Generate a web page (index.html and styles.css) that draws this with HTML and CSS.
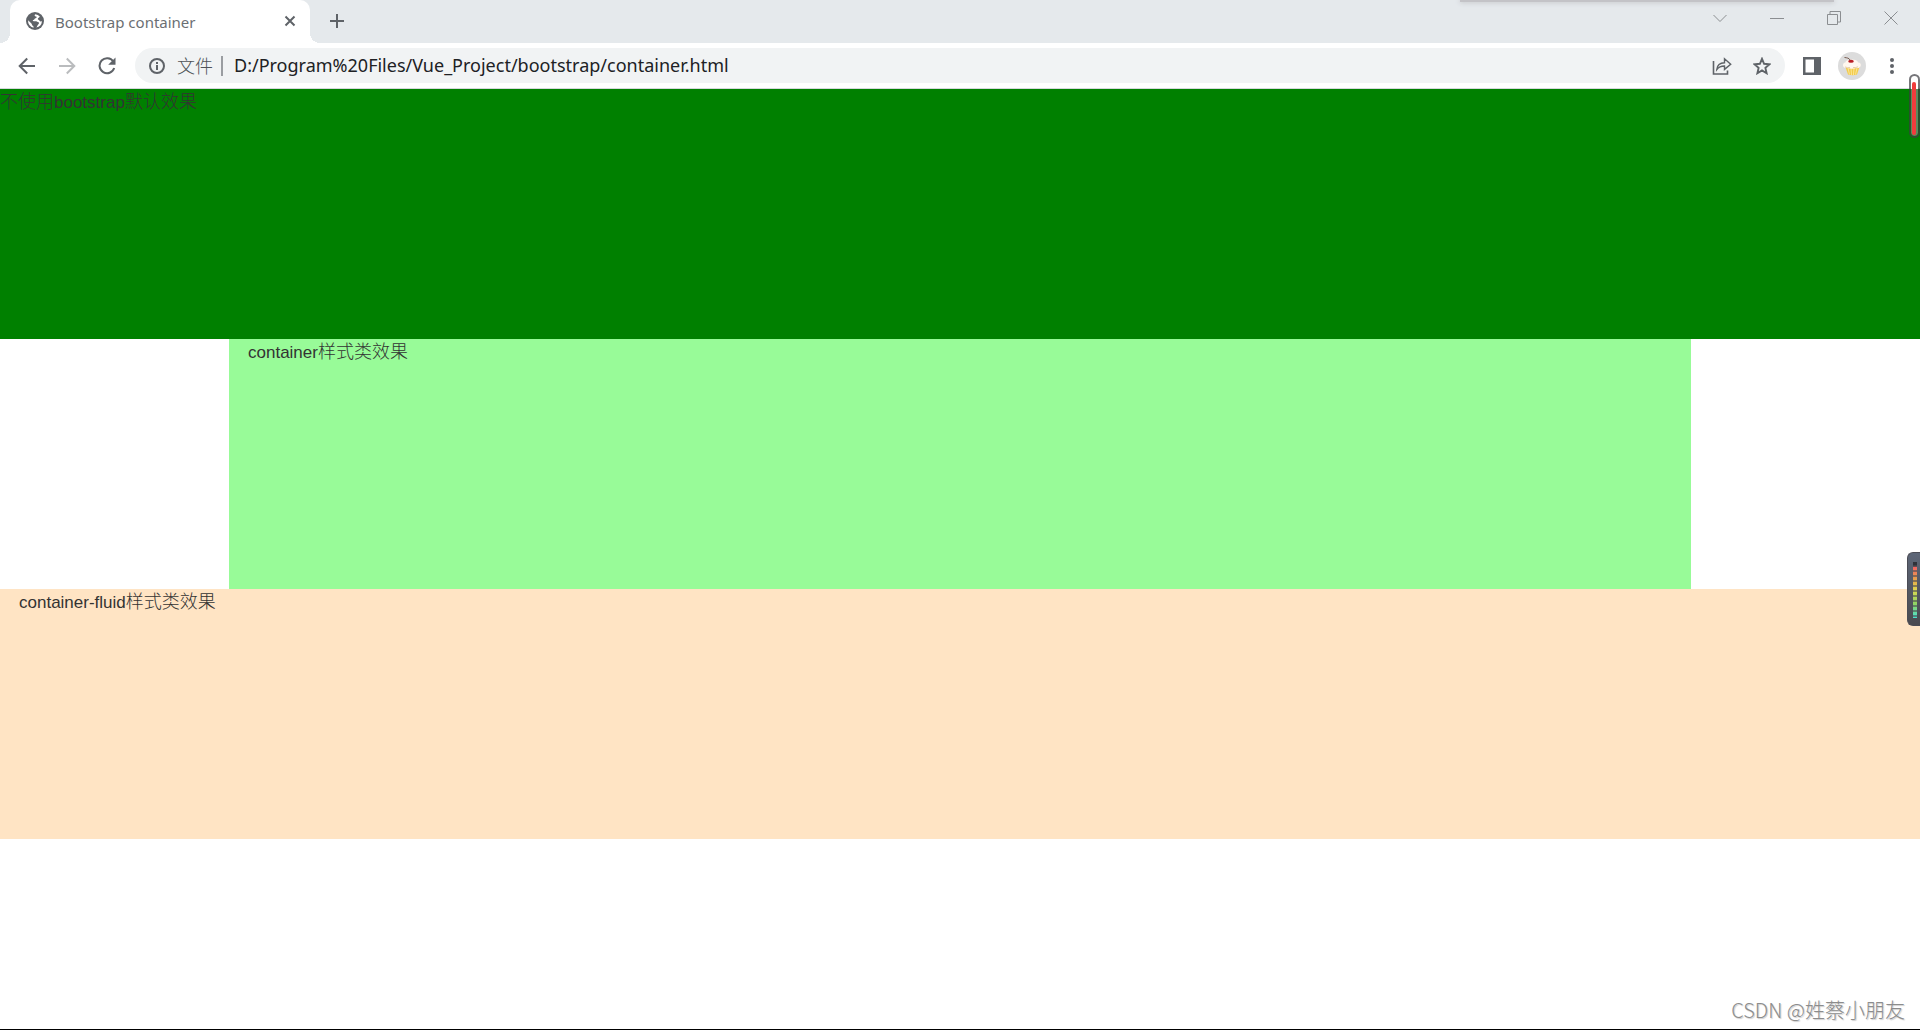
FILE: index.html
```html
<!DOCTYPE html>
<html lang="zh-CN">
<head>
<meta charset="utf-8">
<title>Bootstrap container</title>
<link rel="stylesheet" href="styles.css">
</head>
<body>
<header class="browser">
  <div class="tabstrip">
    <div class="tab">
      <svg class="tab-icon" viewBox="0 0 18 18" width="18" height="18"><circle cx="9" cy="9" r="9" fill="#5f6368"/><path d="M9.300 2.200C8 3 8.600 4.300 10 4.500c1.200.2.600 1.500-.4 1.700-1.300.2-1 1.600-2.300 1.900-.9.200-.6 1.200.5 1.200h2.400c1 0 1.200.8 2.200 1 1 .2.800 1.200 0 1.900-1 .8-1 2.200-2.200 3.300A7 7 0 0 0 16 9.300c-1 .3-2.200.2-2.600-.8-.3-.9-1.600-.6-1.600-1.600 0-1.200 1.600-.9 2-2.300A7 7 0 0 0 9.300 2.200zM2.100 8.200a7 7 0 0 0 5.400 7.600c.2-1-.1-1.600-.8-2-.9-.5-.6-1.700-1.300-2.300z" fill="#fff"/></svg>
      <span class="tab-title">Bootstrap container</span>
      <button class="tab-close" aria-label="关闭标签页"><svg viewBox="0 0 12 12" width="12" height="12"><path d="M1.500 1.500l9 9M10.500 1.500l-9 9" stroke="#5f6368" stroke-width="2"/></svg></button>
    </div>
    <button class="new-tab" aria-label="新标签页"><svg viewBox="0 0 16 16" width="16" height="16"><path d="M8 1v14M1 8h14" stroke="#5f6368" stroke-width="2"/></svg></button>
    <div class="window-controls">
      <button aria-label="搜索标签页"><svg viewBox="0 0 14 14" width="14" height="14"><path d="M.5 4L7 10.500 13.500 4" fill="none" stroke="#8b8e91"/></svg></button>
      <button aria-label="最小化"><svg viewBox="0 0 14 14" width="14" height="14"><path d="M0 7.500h14" stroke="#8b8e91"/></svg></button>
      <button aria-label="还原"><svg viewBox="0 0 14 14" width="14" height="14"><path d="M.5 3.500h10v10H.5zM3 3.500v-3h10.500V11H11" fill="none" stroke="#8b8e91"/></svg></button>
      <button aria-label="关闭"><svg viewBox="0 0 14 14" width="14" height="14"><path d="M.5.5l13 13M13.500.5l-13 13" stroke="#8b8e91"/></svg></button>
    </div>
  </div>
  <div class="toolbar">
    <button class="tool" aria-label="后退"><svg viewBox="0 0 18 18" width="18" height="18"><path d="M17 9H2M9.200 1.500L1.700 9l7.500 7.500" fill="none" stroke="#5f6368" stroke-width="2"/></svg></button>
    <button class="tool" aria-label="前进"><svg viewBox="0 0 18 18" width="18" height="18"><path d="M1 9h15M8.800 1.500L16.300 9l-7.500 7.500" fill="none" stroke="#babcbe" stroke-width="2"/></svg></button>
    <button class="tool" aria-label="重新加载"><svg viewBox="0 0 18 18" width="18" height="18"><path d="M15.300 4.500A7.500 7.500 0 1 0 16.200 11" fill="none" stroke="#5f6368" stroke-width="2"/><path d="M17.500.5v7.300h-7.300z" fill="#5f6368"/></svg></button>
    <div class="omnibox">
      <svg viewBox="0 0 16 16" width="16" height="16"><circle cx="8" cy="8" r="7" fill="none" stroke="#5f6368" stroke-width="2"/><path d="M8 7v5M8 4v2" stroke="#5f6368" stroke-width="2"/></svg>
      <label class="scheme" for="url">文件</label>
      <span class="divider"></span>
      <input class="url" id="url" type="text" value="D:/Program%20Files/Vue_Project/bootstrap/container.html">
      <button class="tool" aria-label="分享"><svg viewBox="0 0 20 18" width="20" height="18"><path d="M1.500 4v13h14v-3.500" fill="none" stroke="#5f6368" stroke-width="1.600"/><path d="M4.800 12.500c.4-4.300 3-6.700 7.700-6.800V1.800L18.700 7.200l-6.200 5.200V9c-3.500 0-5.700.8-7.700 3.500z" fill="none" stroke="#5f6368" stroke-width="1.400"/></svg></button>
      <button class="tool" aria-label="收藏"><svg viewBox="0 0 18 18" width="18" height="18"><path d="M9 1.800l2.100 5 5.400.5-4.100 3.600 1.200 5.300L9 13.400l-4.600 2.800 1.200-5.300L1.500 7.300l5.400-.5z" fill="none" stroke="#5f6368" stroke-width="1.900"/></svg></button>
    </div>
    <button class="tool" aria-label="侧边栏"><svg viewBox="0 0 18 18" width="18" height="18"><path d="M0 0h18v18H0zM2.500 2.500v13H11v-13z" fill="#5f6368" fill-rule="evenodd"/></svg></button>
    <button class="tool" aria-label="用户"><svg viewBox="0 0 28 28" width="28" height="28"><circle cx="14" cy="14" r="14" fill="#dcdcdc"/><path d="M7.500 15h14l-2.500 7.500q-4.500 1.600-9 0z" fill="#f3cb4b"/><path d="M10 16l1.500 6.500M13 16l.5 7M16 16l-.5 7M19 16l-1.500 6.500" stroke="#fbe695"/><path d="M5 13.800c-.3-2 .8-3 2.300-3.200C7.800 8.300 10.800 7.500 14 7.500s5.700 1 6.200 3.100c2 .2 3 1.600 2.500 3.200-.5 1.800-2.300 2.500-4.200 2.200-2.500 1-6.500 1-9 0-2.200.4-4.200-.5-4.500-2.200z" fill="#fff7ee"/><path d="M7 15q3 1 5 .6M15 15.600q3 .2 5-.8" fill="none" stroke="#e8cda8"/><ellipse cx="13" cy="9.200" rx="2.800" ry="1.500" fill="#b91f25"/><path d="M12 8C11 6 9 5.800 6.500 5.500" fill="none" stroke="#765b50"/></svg></button>
    <button class="tool" aria-label="菜单"><svg viewBox="0 0 4 16" width="4" height="16"><g fill="#5f6368"><circle cx="2" cy="2" r="2"/><circle cx="2" cy="8" r="2"/><circle cx="2" cy="14" r="2"/></g></svg></button>
  </div>
</header>
<main class="page">
  <div class="block plain"><span class="zh">不使用</span>bootstrap<span class="zh">默认效果</span></div>
  <div class="block container">container<span class="zh">样式类效果</span></div>
  <div class="block container-fluid">container-fluid<span class="zh">样式类效果</span></div>
</main>
<div class="top-shadow"></div>
<div class="mic-level"></div>
<div class="meter"><div class="meter-scale"></div></div>
<div class="watermark">CSDN @姓蔡小朋友</div>
</body>
</html>
```
FILE: styles.css
```css
* { box-sizing: border-box; }

body {
  margin: 0;
  min-height: 100vh;
  display: flex;
  flex-direction: column;
  position: relative;
  overflow-x: hidden;
  background: #fff;
  border-bottom: 1px solid #000;
  font-family: "Liberation Sans", "Noto Sans CJK SC", sans-serif;
}

button {
  display: flex;
  align-items: center;
  justify-content: center;
  padding: 0;
  border: 0;
  background: none;
}

svg { display: block; flex: none; }

/* Tab strip */
.tabstrip {
  display: flex;
  height: 43px;
  padding-left: 10px;
  background: #e5e9ec;
}

.tab {
  position: relative;
  display: flex;
  align-items: center;
  width: 300px;
  padding: 0 10px 2px 16px;
  background: #fff;
  border-radius: 10px 10px 0 0;
}

.tab::before,
.tab::after {
  content: "";
  position: absolute;
  bottom: 0;
  width: 10px;
  height: 10px;
}

.tab::before {
  right: 100%;
  background: radial-gradient(circle at 0 0, #e5e9ec 10px, #fff 10px);
}

.tab::after {
  left: 100%;
  background: radial-gradient(circle at 100% 0, #e5e9ec 10px, #fff 10px);
}

.tab-title {
  flex: 1;
  margin-left: 11px;
  padding-top: 2px;
  font: 15px/20px "Noto Sans", sans-serif;
  color: #6b6f73;
}

.tab-close { width: 20px; height: 20px; }

.new-tab { width: 34px; margin-left: 10px; padding-bottom: 1px; }

.window-controls {
  display: flex;
  height: 36px;
  margin: 0 1px 0 auto;
}

.window-controls button { width: 57px; }

/* Toolbar */
.toolbar {
  display: flex;
  align-items: center;
  height: 46px;
  padding: 0 8px 0 7px;
  border-bottom: 1px solid #d5d8dc;
}

.tool { width: 40px; height: 34px; flex: none; }

.omnibox {
  flex: 1;
  display: flex;
  align-items: center;
  height: 35px;
  margin: 0 7px 0 8px;
  padding: 0 3px 0 14px;
  border-radius: 18px;
  background: #f1f3f4;
}

.scheme {
  margin-left: 12px;
  padding-bottom: 2px;
  font: 300 18px/24px "Noto Sans CJK SC", sans-serif;
  color: #4f5358;
}

.divider {
  width: 2px;
  height: 20px;
  margin: 0 11px 0 8px;
  background: #9a9da1;
}

.url {
  flex: 1;
  min-width: 0;
  padding: 0 0 2px;
  border: 0;
  background: none;
  font: 18px/24px "Noto Sans", sans-serif;
  color: #202124;
}

/* Page content */
.block {
  height: 250px;
  font-size: 17px;
  line-height: 22px;
  color: #333;
}

.zh {
  font-family: "Noto Sans CJK SC", sans-serif;
  font-size: 18px;
  font-weight: 300;
}

.plain { background: #008000; }

.container {
  max-width: 1462px;
  margin: 0 auto;
  padding: 0 19px;
  background: #98fb98;
}

.container-fluid {
  padding: 0 19px;
  background: #ffe4c4;
}

/* Overlays */
.top-shadow {
  position: absolute;
  top: 0;
  right: 86px;
  width: 374px;
  height: 2px;
  background: #c3c3c7;
  box-shadow: 0 0 5px #aaaaae;
}

.mic-level {
  position: absolute;
  top: 74px;
  right: 0;
  width: 11px;
  height: 64px;
  border: 2px solid rgba(60, 60, 65, .7);
  border-radius: 6px;
  background: linear-gradient(#fff 13px, #5c8a5c 13px) padding-box;
}

.mic-level::after {
  content: "";
  position: absolute;
  inset: 6px 2px 1px 1px;
  border-radius: 2px;
  background: #f03c3c;
}

.meter {
  position: absolute;
  top: 552px;
  right: 0;
  width: 13px;
  height: 74px;
  padding: 9px 3px 8px 5px;
  border: 1px solid #4b4c55;
  border-right: 0;
  border-radius: 6px 0 0 6px;
  background: linear-gradient(#5d6677, #4a4a50);
}

.meter-scale {
  height: 56px;
  background:
    repeating-linear-gradient(transparent 0 3px, rgba(75, 75, 82, .6) 3px 5px),
    linear-gradient(#30323a 4px, #f26464 5px, #e6a64a 18px, #ddd850 28px, #8ed464 42px, #4adfcf);
}

.watermark {
  position: absolute;
  right: 15px;
  bottom: 5px;
  font: 300 20px/28px "Noto Sans CJK SC", sans-serif;
  color: #8c8c8c;
  text-shadow: 1px 1px 1px #ccc;
}
```
